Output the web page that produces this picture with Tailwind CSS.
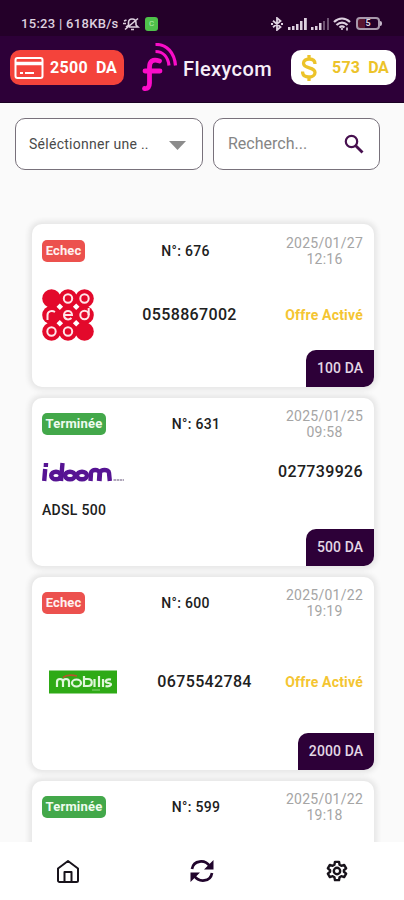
<!DOCTYPE html>
<html lang="fr">
<head>
    <meta charset="UTF-8">
    <meta name="viewport" content="width=device-width, initial-scale=1.0">
    <title>Flexycom</title>
    <script src="https://cdn.jsdelivr.net/npm/@tailwindcss/browser@4"></script>
</head>
<body class="h-screen overflow-hidden bg-[#fafafa] font-['Roboto',sans-serif] text-[#202020]">
    <div class="flex h-full flex-col">

        <!-- Status bar -->
        <div class="flex h-9 shrink-0 items-center justify-between bg-[#240029] pt-[11px] pr-[22px] pl-[21px] text-[#ddd0df]">
            <div class="flex items-center">
                <span class="w-[99px] text-[13px] font-medium tracking-[0.3px] whitespace-nowrap">15:23 | 618KB/s</span>
                <svg class="ml-[3px] h-[14px] w-[17px]" viewBox="0 0 17 14" fill="none" stroke="currentColor" stroke-width="1.600">
                    <path d="M3 10 5.500 8V5.500C5.500 3 7 2 9 2s4 1 4 4v2l2 2H6M8 12.500h3M2 12.500 15 1.500M0 6.500h3M1 4l2.500-1"/>
                </svg>
                <span class="ml-[5px] flex h-[14px] w-[13px] items-center justify-center rounded-[3px] bg-[#4fc04b] text-[8px] text-[#b5edb1]">C</span>
            </div>
            <div class="flex items-center">
                <svg class="h-[14px] w-[14px]" viewBox="0 0 14 14" fill="none" stroke="currentColor" stroke-width="1.800">
                    <path d="M3 3.800 10.500 10 7 13V1l3.500 3L3 10.200M1 7h2M11 7h2"/>
                </svg>
                <svg class="ml-[4px] h-[12px] w-[20px]" viewBox="0 0 20 12" fill="currentColor">
                    <path d="M0 9h2.500v3H0zM4 8h2.500v4H4zM8 6h2.500v6H8zM12 3h2.500v9H12zM16 0h2.800v12H16z"/>
                </svg>
                <svg class="ml-[3px] h-[12px] w-[19px]" viewBox="0 0 19 12" fill="currentColor">
                    <path d="M0 9h2.500v3H0zM4 8h2.500v4H4zM8 5h2.500v7H8z"/>
                    <path opacity=".4" d="M12 3h2v9h-2zM16 0h2v12h-2z"/>
                </svg>
                <svg class="ml-[3px] h-[14px] w-[18px]" viewBox="0 0 18 14" fill="none" stroke="currentColor" stroke-width="2.300">
                    <path d="M1 5c5-4.500 11-4.500 16 0M3.500 8c3.500-3 7.500-3 11 0M6.500 10.500c1.500-1.300 3.500-1.300 5 0"/>
                    <path d="M9 11v2M14 10.500v3" stroke-width="1.600"/>
                </svg>
                <span class="ml-[5px] flex h-[13px] w-[24px] items-center justify-center rounded-[4px] border-2 border-[#a898ab] bg-linear-to-r from-[#59152f] from-35% to-transparent to-35% text-[9px] font-bold">5</span>
                <span class="h-[5px] w-[2px] rounded-r bg-[#c5b6c8]"></span>
            </div>
        </div>

        <!-- App header -->
        <header class="flex h-[67px] shrink-0 items-start border-b border-[#1b0023] bg-[#2d0038] pt-[14px] pl-[10px]">
            <div class="flex h-[35px] w-[114px] items-center rounded-[10px] bg-[#f4433b] pl-[4px] text-white">
                <svg class="h-[24px] w-[30px] shrink-0" viewBox="0 0 30 24" fill="none" stroke="currentColor" stroke-width="2">
                    <rect x="1.500" y="2" width="27" height="20" rx="2"/>
                    <path d="M1 7.500h28" stroke-width="3.500"/>
                    <path d="M6 17h3M11 17h9" stroke-width="1.800"/>
                </svg>
                <span class="ml-[6px] text-[16px] leading-none font-bold tracking-[0.3px] whitespace-nowrap">2500</span>
                <span class="ml-[8px] text-[16px] leading-none font-bold tracking-[-0.2px]">DA</span>
            </div>
            <svg class="-mt-[7px] ml-[18px] h-[52px] w-[37px] shrink-0" viewBox="0 0 37 52" fill="none" stroke="#fb0cc8" stroke-linecap="round">
                <path stroke-width="4.800" d="M17.500 18c-7-2.500-10 .500-10 6v16c0 4-1.500 6-5 5.500M3 28h15"/>
                <path stroke-width="3.200" stroke-linecap="butt" d="M13.500 1.500C25 1 32.500 10 33.500 22.500M13.500 8.500c7.500 0 12.500 5.500 13.500 14"/>
            </svg>
            <h1 class="mt-[3px] ml-[4px] w-[90px] text-[20px] leading-8 font-medium tracking-[0.4px] text-[#f7eef8]">Flexycom</h1>
            <div class="ml-[18px] flex h-[35px] w-[105px] items-center rounded-[10px] bg-white text-[#ecc32a]">
                <svg class="ml-[10px] h-[26px] w-[16px] shrink-0" viewBox="0 0 16 26" fill="none" stroke="currentColor" stroke-width="3.300">
                    <path d="M14 9c0-3.300-2.300-5-5.800-5C4.800 4 2.500 5.700 2.500 8.300c0 6 11.500 3.200 11.500 9.200 0 2.700-2.500 4.500-6 4.500-4 0-6.500-2-6.500-5.500M8 0v4.500M8 21.500V26"/>
                </svg>
                <span class="ml-[15px] text-[16px] leading-none font-bold tracking-[0.2px]">573</span>
                <span class="ml-[8px] text-[16px] leading-none font-bold tracking-[-0.4px]">DA</span>
            </div>
        </header>

        <!-- Filters -->
        <div class="flex shrink-0 gap-[10px] pt-[15px] pl-[15px]">
            <button class="flex h-[52px] w-[188px] items-center justify-between rounded-[10px] border border-[#78717b] bg-white pr-[16px] pl-[13px]">
                <span class="text-[14px] tracking-[0.27px] whitespace-nowrap text-[#4a4a4a]">Séléctionner une ..</span>
                <svg class="mt-[3px] h-[9px] w-[17px]" viewBox="0 0 17 9" fill="#8c8c8c"><path d="M0 0h17L8.500 9z"/></svg>
            </button>
            <div class="flex h-[52px] w-[167px] items-center justify-between rounded-[10px] border border-[#78717b] bg-white pr-[15px] pl-[14px]">
                <span class="text-[16px] text-[#858585]">Recherch...</span>
                <svg class="h-[20px] w-[20px]" viewBox="0 0 20 20" fill="none" stroke="#47104f" stroke-width="2.200">
                    <circle cx="7.500" cy="7.500" r="5.700"/>
                    <path d="m11.500 11.500 7 7" stroke-width="2.800"/>
                </svg>
            </div>
        </div>

        <!-- Transactions -->
        <main class="flex min-h-0 flex-1 flex-col gap-[11px] overflow-hidden pt-[54px] pr-[30px] pl-[32px]">
            <article class="flex h-[163px] w-[342px] shrink-0 flex-col rounded-[10px] bg-white shadow-[0_0_5px_3px_#e6e6e6]">
                <div class="flex items-center justify-between pt-[11px] pr-[11px] pl-[10px]">
                    <span class="flex h-[22px] w-[43px] items-center justify-center rounded-[5px] bg-[#ec514e] text-[13px] font-bold tracking-[0.1px] text-[#fff1f0]">Echec</span>
                    <span class="text-[14px] font-medium tracking-[0.3px]">N°: 676</span>
                    <span class="w-[77px] text-center text-[14px] leading-4 tracking-[0.25px] text-[#a5a5a5]">2025/01/27 12:16</span>
                </div>
                <div class="mt-[22px] flex h-[52px] items-center justify-between pr-[11px] pl-[10px]">
                    <svg class="h-[52px] w-[52px]" viewBox="0 0 52 52" fill="#e3092b">
                        <path d="M9 9h34v34H9z"/>
                        <circle cx="9.500" cy="9.500" r="9.300"/><circle cx="26" cy="9.500" r="9.300"/><circle cx="42.500" cy="9.500" r="9.300"/>
                        <circle cx="9.500" cy="26" r="9.300"/><circle cx="26" cy="26" r="9.300"/><circle cx="42.500" cy="26" r="9.300"/>
                        <circle cx="9.500" cy="42.500" r="9.300"/><circle cx="26" cy="42.500" r="9.300"/><circle cx="42.500" cy="42.500" r="9.300"/>
                        <path fill="#fff" d="m17.800 14.500 3.300 3.300-3.300 3.300-3.300-3.300zM34.200 14.500l3.300 3.300-3.300 3.300-3.300-3.300zM17.800 30.900l3.300 3.300-3.300 3.300-3.300-3.300zM34.200 30.900l3.300 3.300-3.300 3.300-3.300-3.300z"/>
                        <g fill="none" stroke="#ffe6e9" stroke-width="2">
                            <circle cx="26" cy="9.500" r="4.200"/><circle cx="42.500" cy="9.500" r="4.200"/>
                            <circle cx="9.500" cy="42.500" r="4.200"/><circle cx="26" cy="42.500" r="4.200"/>
                            <path d="M5.500 31v-5c0-3.500 4-5 7.500-3M22 26h8c0-5.500-8-5.500-8 0s5.500 5 7.500 3M46.700 19v7"/>
                            <circle cx="42.500" cy="26" r="4.200"/>
                        </g>
                    </svg>
                    <span class="text-[16px] font-medium tracking-[0.35px]">0558867002</span>
                    <span class="text-[14px] font-bold tracking-[0.2px] text-[#f4c532]">Offre Activé</span>
                </div>
                <div class="mt-auto flex h-[37px] w-[68px] items-center justify-center self-end rounded-tl-[10px] rounded-br-[10px] bg-[#2d0038] text-[14px] font-medium tracking-[0.1px] text-[#e3d7e5]">100 DA</div>
            </article>

            <article class="flex h-[168px] w-[342px] shrink-0 flex-col rounded-[10px] bg-white shadow-[0_0_5px_3px_#e6e6e6]">
                <div class="flex items-center justify-between pt-[10px] pr-[11px] pl-[10px]">
                    <span class="flex h-[22px] w-[64px] items-center justify-center rounded-[5px] bg-[#43a84a] text-[13px] font-bold tracking-[0.2px] text-[#effbef]">Terminée</span>
                    <span class="text-[14px] font-medium tracking-[0.3px]">N°: 631</span>
                    <span class="w-[77px] text-center text-[14px] leading-4 tracking-[0.25px] text-[#a5a5a5]">2025/01/25 09:58</span>
                </div>
                <div class="mt-[21px] flex h-[22px] items-center justify-between pr-[11px] pl-[10px]">
                    <svg class="h-[22px] w-[82px]" viewBox="0 0 82 22" fill="none" stroke="#561493" stroke-width="4.400">
                        <path d="M3.200 8 2.200 20M4 2 3.800 6M20.500 2 19 20M48.500 20l.5-8c0-4 8.500-4 8.500 0l-.5 8M57.500 20l.5-8c0-4 9-4 9 0l.8 8"/>
                        <ellipse cx="14" cy="14.500" rx="4.800" ry="3.800"/>
                        <ellipse cx="28" cy="14.500" rx="5" ry="3.800"/>
                        <ellipse cx="40" cy="14.500" rx="5" ry="3.800"/>
                        <path stroke="#978ba5" stroke-width="1.500" stroke-dasharray="2.500 .600" d="M71.500 19H82"/>
                    </svg>
                    <span class="text-[16px] font-medium tracking-[0.35px]">027739926</span>
                </div>
                <span class="mt-[17px] pl-[10px] text-[14px] leading-5 font-medium tracking-[0.3px]">ADSL 500</span>
                <div class="mt-auto flex h-[37px] w-[68px] items-center justify-center self-end rounded-tl-[10px] rounded-br-[10px] bg-[#2d0038] text-[14px] font-medium tracking-[0.1px] text-[#e3d7e5]">500 DA</div>
            </article>

            <article class="flex h-[193px] w-[342px] shrink-0 flex-col rounded-[10px] bg-white shadow-[0_0_5px_3px_#e6e6e6]">
                <div class="flex items-center justify-between pt-[10px] pr-[11px] pl-[10px]">
                    <span class="flex h-[22px] w-[43px] items-center justify-center rounded-[5px] bg-[#ec514e] text-[13px] font-bold tracking-[0.1px] text-[#fff1f0]">Echec</span>
                    <span class="text-[14px] font-medium tracking-[0.3px]">N°: 600</span>
                    <span class="w-[77px] text-center text-[14px] leading-4 tracking-[0.25px] text-[#a5a5a5]">2025/01/22 19:19</span>
                </div>
                <div class="mt-[22px] flex h-[82px] items-center justify-between pr-[11px] pl-[10px]">
                    <svg class="h-[24px] w-[82px]" viewBox="0 0 82 24" fill="none">
                        <path fill="#2eaa16" d="M7 .5h68v23H7z"/>
                        <g stroke="#e0f6db" stroke-width="2.200">
                            <path d="M15 17v-5c0-4 6-4 6 0v5M21 12c0-4 6-4 6 0v5M42 6v10h4c5 0 5-7 0-7h-4M52.500 9v8M57 6v11M61 9v8M69 9.500c-6-1-7 3-2.500 3.500s2.500 4-3 3.200"/>
                            <ellipse cx="34.500" cy="13" rx="4.500" ry="3.500"/>
                        </g>
                        <path stroke="#b8542c" stroke-width="1.800" d="M21 7.500c3-2.500 8-3 14-1.500"/>
                        <path stroke="#8bd47d" d="M50 20h8"/>
                    </svg>
                    <span class="text-[16px] font-medium tracking-[0.35px]">0675542784</span>
                    <span class="text-[14px] font-bold tracking-[0.2px] text-[#f4c532]">Offre Activé</span>
                </div>
                <div class="mt-auto flex h-[37px] w-[76px] items-center justify-center self-end rounded-tl-[10px] rounded-br-[10px] bg-[#2d0038] text-[14px] font-medium tracking-[0.1px] text-[#e3d7e5]">2000 DA</div>
            </article>

            <article class="flex h-[168px] w-[342px] shrink-0 flex-col rounded-[10px] bg-white shadow-[0_0_5px_3px_#e6e6e6]">
                <div class="flex items-center justify-between pt-[10px] pr-[11px] pl-[10px]">
                    <span class="flex h-[22px] w-[64px] items-center justify-center rounded-[5px] bg-[#43a84a] text-[13px] font-bold tracking-[0.2px] text-[#effbef]">Terminée</span>
                    <span class="text-[14px] font-medium tracking-[0.3px]">N°: 599</span>
                    <span class="w-[77px] text-center text-[14px] leading-4 tracking-[0.25px] text-[#a5a5a5]">2025/01/22 19:18</span>
                </div>
            </article>
        </main>

        <!-- Bottom navigation -->
        <nav class="z-10 grid h-[58px] shrink-0 grid-cols-3 items-center justify-items-center bg-white">
            <svg class="ml-[2px] h-[26px] w-[24px]" viewBox="0 0 24 26" fill="none" stroke="#18131b" stroke-width="2" stroke-linejoin="round">
                <path d="M2 10.500 12 3l10 7.500v12c0 1-.700 1.500-1.500 1.500h-17C2.700 24 2 23.500 2 22.500zM8.500 24V14h7v10"/>
            </svg>
            <svg class="h-[24px] w-[26px]" viewBox="0 0 26 24" fill="none" stroke="#21052c" stroke-width="2.700">
                <path d="M3 10C4.500 1 16 0 21 7.500M23 14c-1.500 9-13 10-18 2.500"/>
                <path fill="#21052c" stroke="none" d="M24.500 1v9.500H15zM1.500 23v-9.500H11z"/>
            </svg>
            <svg class="h-[22px] w-[22px]" viewBox="0 0 24 24" fill="none" stroke="#18131b" stroke-width="2.600" stroke-linejoin="round">
                <path d="M9.800 2h4.400l.6 3.200 1.900 1.100 3.100-1 2.200 3.800-2.500 2.100v1.600l2.500 2.100-2.200 3.800-3.100-1-1.900 1.100-.6 3.200H9.800l-.6-3.200-1.900-1.100-3.100 1L2 14.900l2.500-2.100v-1.600L2 9.100l2.200-3.800 3.100 1 1.900-1.100z"/>
                <circle cx="12" cy="12" r="3.500"/>
            </svg>
        </nav>
    </div>
</body>
</html>
